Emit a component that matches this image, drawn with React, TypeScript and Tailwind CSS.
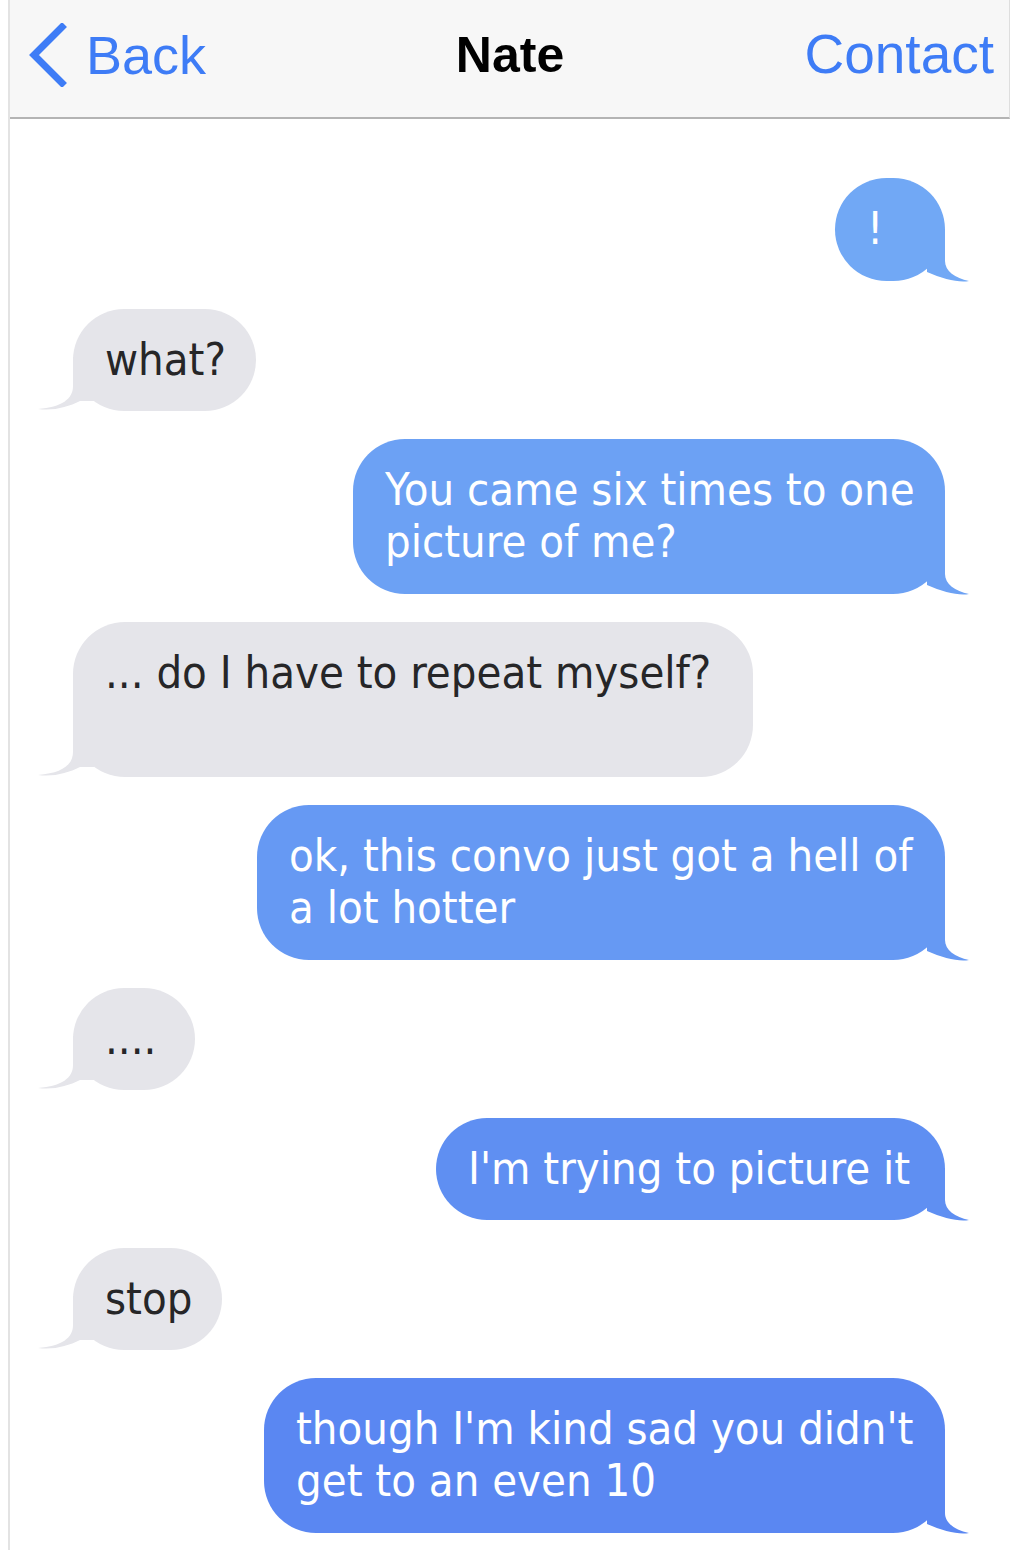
type Msg = {
  me: boolean;
  lines: string[];
  size: string;
  bg: string;
  tail: string;
};

const msgs: Msg[] = [
  { me: true, lines: ["!"], size: "w-[110px] h-[103px]", bg: "bg-[#71a8f5]", tail: "#71a8f5" },
  { me: false, lines: ["what?"], size: "w-[183px] h-[102px]", bg: "bg-[#e5e5ea]", tail: "#e5e5ea" },
  { me: true, lines: ["You came six times to one", "picture of me?"], size: "w-[592px] h-[155px]", bg: "bg-[#6ca1f4]", tail: "#6ca1f4" },
  { me: false, lines: ["... do I have to repeat myself?"], size: "w-[680px] h-[155px]", bg: "bg-[#e5e5ea]", tail: "#e5e5ea" },
  { me: true, lines: ["ok, this convo just got a hell of", "a lot hotter"], size: "w-[688px] h-[155px]", bg: "bg-[#6699f3]", tail: "#6699f3" },
  { me: false, lines: ["...."], size: "w-[122px] h-[102px]", bg: "bg-[#e5e5ea]", tail: "#e5e5ea" },
  { me: true, lines: ["I'm trying to picture it"], size: "w-[509px] h-[102px]", bg: "bg-[#5f8ff2]", tail: "#5f8ff2" },
  { me: false, lines: ["stop"], size: "w-[149px] h-[102px]", bg: "bg-[#e5e5ea]", tail: "#e5e5ea" },
  { me: true, lines: ["though I'm kind sad you didn't", "get to an even 10"], size: "w-[681px] h-[155px]", bg: "bg-[#5a87f2]", tail: "#5a87f2" },
];

function Bubble({ m }: { m: Msg }) {
  return (
    <div className={m.me ? "flex justify-end" : "flex justify-start"}>
      <div
        className={`relative rounded-[52px] px-[32px] py-[25px] ${m.size} ${m.bg} ${
          m.me ? "text-white" : "text-[#262628]"
        }`}
      >
        {m.me ? (
          <svg className="absolute right-[-24px] bottom-[-2px]" width="50" height="54" viewBox="0 0 50 54">
            <path d="M26 0 L26 32 C26 42 36 49 50 52 C40 54 24 50 8 43 L8 0 Z" fill={m.tail} />
          </svg>
        ) : (
          <svg className="absolute left-[-35px] bottom-[-2px]" width="60" height="56" viewBox="0 0 60 56">
            <path d="M35 0 L35 29 C35 42 24 50 0 52 C16 54 30 50 42 44 L56 44 L56 0 Z" fill={m.tail} />
          </svg>
        )}
        <div className="relative">
          {m.lines.map((l, i) => (
            <span key={i} className="block whitespace-nowrap">
              {l}
            </span>
          ))}
        </div>
      </div>
    </div>
  );
}

export default function App() {
  return (
    <div className="w-[1013px] h-[1550px] bg-white flex overflow-hidden">
      <div className="w-[8px] shrink-0"></div>
      <div className="w-[2px] shrink-0 bg-[#e3e3e3]"></div>
      <div className="flex-1 flex flex-col">
        <header className="h-[119px] mr-[3px] bg-[#f7f7f7] border-b-2 border-b-[#b4b4b4] border-r border-r-[#dedede] flex items-center pb-[8px] pl-[16px] pr-[15px] font-['Liberation_Sans',Arial,sans-serif]">
          <div className="flex-1 flex items-center gap-[18px] text-[#3e7cf6]">
            <svg width="42" height="64" viewBox="0 0 42 64">
              <path d="M36 4 L8 32 L36 60" fill="none" stroke="#3e7cf6" strokeWidth="7" strokeLinecap="square" />
            </svg>
            <span className="text-[54px] leading-none">Back</span>
          </div>
          <span className="text-[50px] font-bold text-black leading-none">Nate</span>
          <div className="flex-1 flex justify-end">
            <span className="text-[55px] text-[#3e7cf6] leading-none">Contact</span>
          </div>
        </header>
        <main className="flex flex-col gap-[28px] pt-[59px] pl-[63px] pr-[68px] text-[45px] leading-[52px] font-['DejaVu_Sans_Condensed','DejaVu_Sans',sans-serif]">
          {msgs.map((m, i) => (
            <Bubble key={i} m={m} />
          ))}
        </main>
      </div>
    </div>
  );
}
